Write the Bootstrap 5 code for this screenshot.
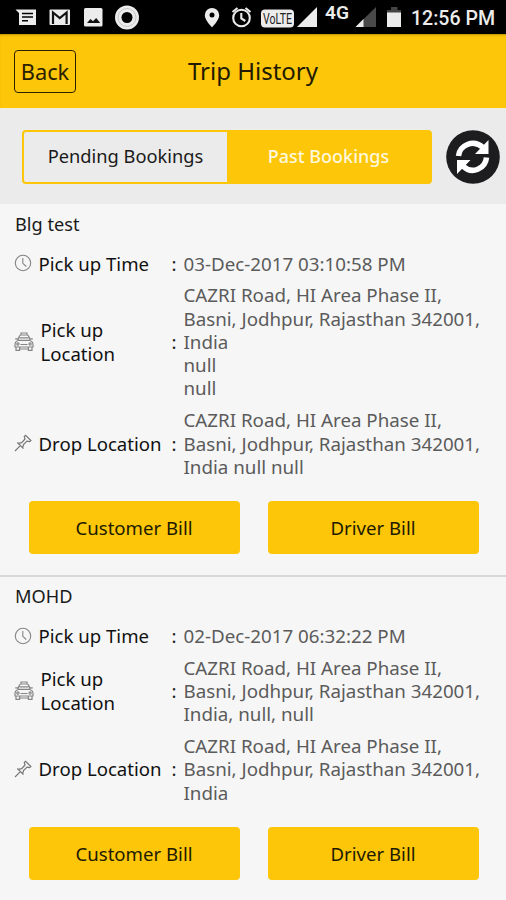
<!DOCTYPE html>
<html lang="en">
<head>
<meta charset="utf-8">
<meta name="viewport" content="width=device-width, initial-scale=1">
<title>Trip History</title>
<link href="https://cdn.jsdelivr.net/npm/bootstrap@5.3.0/dist/css/bootstrap.min.css" rel="stylesheet">
<style>
  :root { --brand: #fdc608; }
  body { font-family: "Noto Sans", sans-serif; font-size: 18.75px; line-height: 23.3px; color: #1a1a1a; background: #f6f6f6; height: 900px; overflow: hidden; }
  .status-strip { height: 34px; background: #000; }
  .clock-text { font: 500 19.5px/24px Roboto, sans-serif; color: #ececec; }
  .app-header { display: grid; grid-template-columns: 1fr auto 1fr; height: 74px; padding: 0 14px; background: var(--brand); box-shadow: inset 0 2px 2px -1px #b98f00; }
  .back-btn { --bs-btn-color: #2a2100; --bs-btn-border-color: #2a2100; --bs-btn-padding-x: 0; --bs-btn-padding-y: 0; --bs-btn-border-radius: 4px; width: 62px; height: 43px; font-size: 21.8px; border-width: 1.4px; justify-self: start; padding-top: 3px; }
  .page-title { font-size: 24px; line-height: 30px; font-weight: 400; color: #211a00; }
  .tab-strip { height: 96px; padding: 0 6px 0 22px; background: #ebebeb; border-top: 1px solid #f7ecd5; }
  .seg-tabs { width: 410px; height: 54px; border: 2px solid var(--brand); border-radius: 4px; }
  .seg-tabs .btn { --bs-btn-border-width: 0; --bs-btn-padding-y: 0; --bs-btn-padding-x: 0; font-size: 18.3px; border-radius: 0; width: 203px; flex: 1 1 0; padding-bottom: 1px; }
  .seg-off { --bs-btn-color: #1a1a1a; }
  .seg-on { --bs-btn-color: #fff8dc; --bs-btn-bg: var(--brand); font-weight: 500; }
  .seg-tabs .seg-on { font-size: 18px; }
  .trip { padding: 9px 14px 21px; border-bottom: 2px solid #d8d8d8; }
  .trip + .trip { padding-top: 8px; border-bottom: 0; }
  .trip-name { font-size: 18.2px; line-height: 23.3px; font-weight: 400; margin: 0 0 11.4px 1px; }
  .trip-row { padding: 4px 0; }
  .trip-row + .trip-row { padding: 4.3px 0; }
  .trip-label { width: 157.500px; color: #111; font-size: 18.6px; }
  .trip-label svg { flex: none; margin-right: 6.5px; }
  .trip-colon { width: 12px; }
  .trip-value { color: #5b5b5b; white-space: nowrap; }
  .bill-row { padding: 18.800px 13px 0 14.500px; gap: 28px; }
  .bill-row .btn { --bs-btn-bg: var(--brand); --bs-btn-color: #211a00; --bs-btn-border-width: 0; --bs-btn-padding-y: 0; --bs-btn-border-radius: 4px; height: 53px; width: 211px; font-size: 18.6px; }
</style>
</head>
<body>
<svg width="0" height="0" class="position-absolute">
  <symbol id="i-clock" viewBox="0 0 18 18"><g fill="none" stroke="#858585" stroke-width="1.1"><circle cx="9" cy="9" r="7.7"/><path d="M8.8 4v5.3l3.5 3.2"/></g></symbol>
  <symbol id="i-taxi" viewBox="0 0 20 20"><g fill="none" stroke="#858585" stroke-width="1.2"><path d="M7 3V1h6v2M3.800 8.300l1.500-4q.5-1.300 1.800-1.300h5.800q1.300 0 1.800 1.300l1.500 4M4 8.300h12M5.500 5.800h9M3.800 8.500Q1 9.800 1 12v3h18v-3q0-2.200-2.800-3.500M1.200 6.800h2.800M18.800 6.800H16M2 15v3.300h3.600V15M14.400 15v3.300H18V15M6.500 12.500h7M5.600 17h8.800"/><circle cx="3.900" cy="12" r="1.100"/><circle cx="16.100" cy="12" r="1.100"/></g></symbol>
  <symbol id="i-pin" viewBox="0 0 18 18"><path d="M1 17l5.300-5.300M3.300 8.500l6.200 6.200M4.300 9.400L7.700 8.700 11 5l-.7-2.600L11.600 1.300l5.300 5.200-1.300 1.200-2.600-.6-3.500 3.500-.8 3" fill="none" stroke="#777" stroke-width="1.200"/></symbol>
</svg>

<div class="status-strip">
  <svg class="d-block" width="506" height="34" viewBox="0 0 506 34">
    <g fill="#ececec">
      <path d="M15.500 9.500H36V25H19V13z"/><path d="M22 13.500h11M22 17h11M22 20.700h6" stroke="#000" stroke-width="1.600"/>
      <rect x="49.500" y="9.500" width="20.500" height="15.500" rx="1"/><path d="M53 24V12.500l6.800 5.500 6.800-5.500V24" fill="none" stroke="#111" stroke-width="2.200"/>
      <rect x="84" y="8" width="18.500" height="18.500" rx="1.500"/><path d="M87 23l3.500-4 2.500 2.300 3.200-3.300 4 5z" fill="#111"/>
      <circle cx="127" cy="17.500" r="12"/><circle cx="127" cy="17.500" r="9" fill="none" stroke="#bbb" stroke-width=".8"/><circle cx="127" cy="17.500" r="5.500" fill="#000"/>
      <path d="M212 8a7.200 7.200 0 0 0-7.200 7.200c0 5 7.200 12 7.200 12s7.200-7 7.200-12A7.200 7.200 0 0 0 212 8z"/><circle cx="212" cy="15" r="2.500" fill="#000"/>
      <g fill="none" stroke="#ececec" stroke-width="2.100"><circle cx="241.500" cy="18" r="8.300"/><path d="M232.500 12l5-4M250.500 12l-5-4M241.300 13v5.500l4 2.500"/></g>
      <rect x="261" y="9.500" width="33" height="18" rx="4"/>
      <text x="263" y="24.300" textLength="29" lengthAdjust="spacingAndGlyphs" font-family="Roboto, sans-serif" font-size="15.500" font-weight="400" fill="#222">VoLTE</text>
      <path d="M297 27L317 7v20z"/>
      <text x="325" y="18.500" textLength="24" lengthAdjust="spacingAndGlyphs" font-family="Roboto, sans-serif" font-size="17.500" font-weight="600">4G</text>
      <path d="M355.500 27L376 7v20z" fill="#494949"/><path d="M355.500 27l8-8v8z"/>
      <path d="M391 7h6.500v3H401v3h-14v-3h4z" fill="#444"/><path d="M387 12.500h14V27h-14z"/>
      <text x="411" y="25.200" textLength="84" lengthAdjust="spacingAndGlyphs" class="clock-text" fill="#ececec">12:56 PM</text>
    </g>
  </svg>
</div>

<header class="app-header align-items-center">
  <button type="button" class="btn back-btn">Back</button>
  <h1 class="page-title mb-0">Trip History</h1>
</header>

<div class="tab-strip d-flex align-items-center justify-content-between">
  <div class="seg-tabs d-flex" role="group">
    <button type="button" class="btn seg-off">Pending Bookings</button>
    <button type="button" class="btn seg-on">Past Bookings</button>
  </div>
  <svg width="54" height="56" viewBox="0 0 54 56"><circle cx="27" cy="28" r="26.800" fill="#1d1d1f"/>
    <g fill="none" stroke="#fff" stroke-width="5.500"><path d="M12.500 27C13.500 16.500 27 9.500 37 18.500"/><path d="M40.500 28.500C39.500 39.500 26 46 17 37"/></g>
    <path d="M42.500 11V25H29zM11 31H24.500L11 45z" fill="#fff"/>
  </svg>
</div>

<main>
  <section class="trip">
    <h2 class="trip-name">Blg test</h2>
    <div class="trip-row d-flex align-items-center">
      <div class="trip-label d-flex align-items-center"><svg width="18" height="18"><use href="#i-clock"/></svg>Pick up Time</div>
      <div class="trip-colon">:</div><div class="trip-value">03-Dec-2017 03:10:58 PM</div>
    </div>
    <div class="trip-row d-flex align-items-center">
      <div class="trip-label d-flex align-items-center"><svg width="20" height="20"><use href="#i-taxi"/></svg><span>Pick up<br>Location</span></div>
      <div class="trip-colon">:</div><div class="trip-value">CAZRI Road, HI Area Phase II,<br>Basni, Jodhpur, Rajasthan 342001,<br>India<br>null<br>null</div>
    </div>
    <div class="trip-row d-flex align-items-center">
      <div class="trip-label d-flex align-items-center"><svg width="18" height="18"><use href="#i-pin"/></svg>Drop Location</div>
      <div class="trip-colon">:</div><div class="trip-value">CAZRI Road, HI Area Phase II,<br>Basni, Jodhpur, Rajasthan 342001,<br>India null null</div>
    </div>
    <div class="bill-row d-flex">
      <button type="button" class="btn">Customer Bill</button>
      <button type="button" class="btn">Driver Bill</button>
    </div>
  </section>

  <section class="trip">
    <h2 class="trip-name">MOHD</h2>
    <div class="trip-row d-flex align-items-center">
      <div class="trip-label d-flex align-items-center"><svg width="18" height="18"><use href="#i-clock"/></svg>Pick up Time</div>
      <div class="trip-colon">:</div><div class="trip-value">02-Dec-2017 06:32:22 PM</div>
    </div>
    <div class="trip-row d-flex align-items-center">
      <div class="trip-label d-flex align-items-center"><svg width="20" height="20"><use href="#i-taxi"/></svg><span>Pick up<br>Location</span></div>
      <div class="trip-colon">:</div><div class="trip-value">CAZRI Road, HI Area Phase II,<br>Basni, Jodhpur, Rajasthan 342001,<br>India, null, null</div>
    </div>
    <div class="trip-row d-flex align-items-center">
      <div class="trip-label d-flex align-items-center"><svg width="18" height="18"><use href="#i-pin"/></svg>Drop Location</div>
      <div class="trip-colon">:</div><div class="trip-value">CAZRI Road, HI Area Phase II,<br>Basni, Jodhpur, Rajasthan 342001,<br>India</div>
    </div>
    <div class="bill-row d-flex">
      <button type="button" class="btn">Customer Bill</button>
      <button type="button" class="btn">Driver Bill</button>
    </div>
  </section>
</main>
<script src="https://cdn.jsdelivr.net/npm/bootstrap@5.3.0/dist/js/bootstrap.bundle.min.js"></script>
</body>
</html>
